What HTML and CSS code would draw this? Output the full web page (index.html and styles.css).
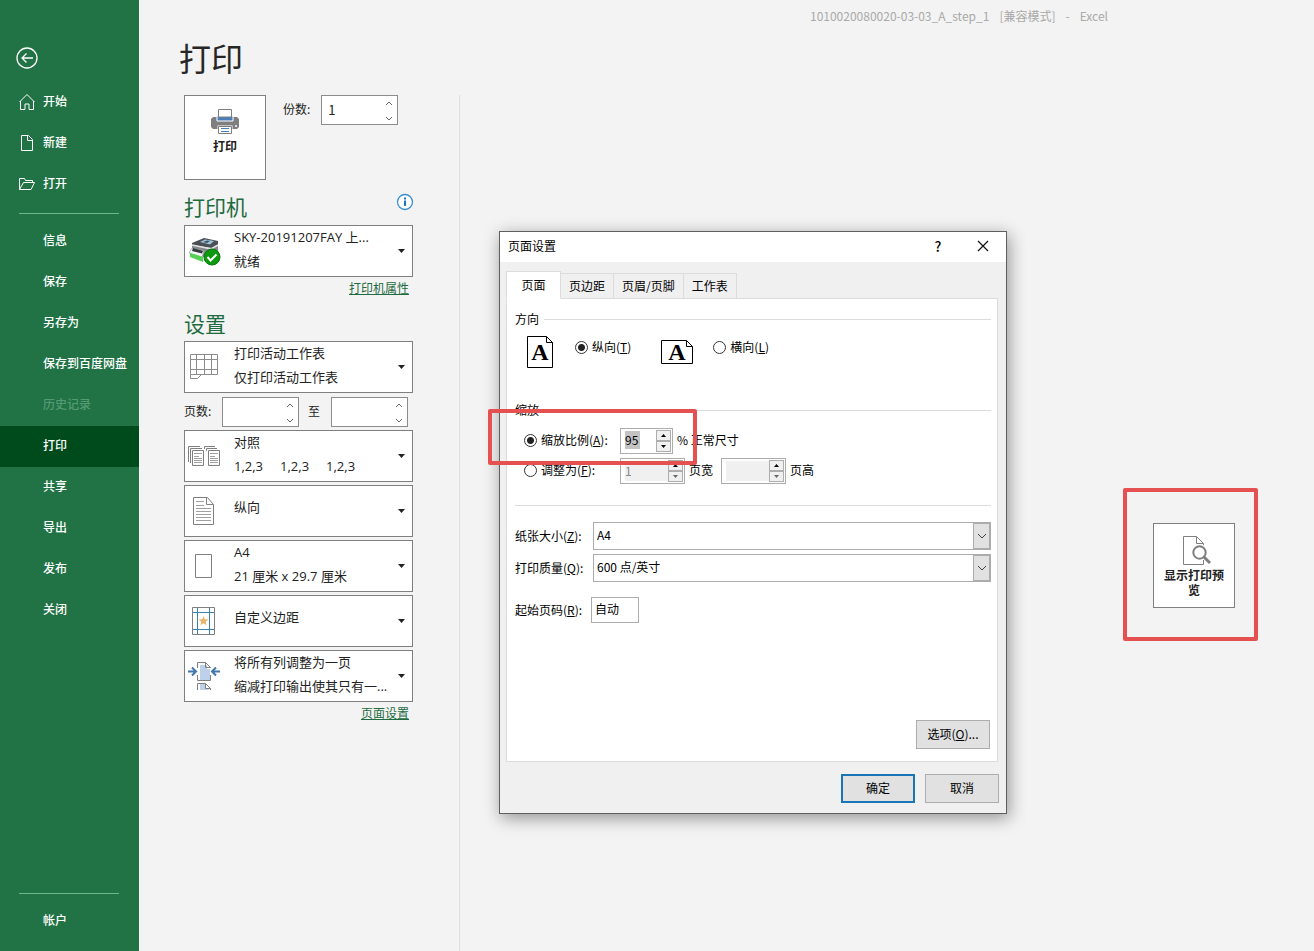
FILE: index.html
```html
<!DOCTYPE html>
<html lang="zh-CN">
<head>
<meta charset="utf-8">
<title>打印 - Excel</title>
<link rel="stylesheet" href="styles.css">
</head>
<body>
<svg class="defs" aria-hidden="true">
  <symbol id="up" viewBox="0 0 8 5"><path d="M1 4 4 1l3 3" fill="none" stroke="#666"/></symbol>
  <symbol id="down" viewBox="0 0 8 5"><path d="M1 1l3 3 3-3" fill="none" stroke="#666"/></symbol>
  <symbol id="tri-up" viewBox="0 0 5 3"><path d="M0 3 2.500 0 5 3z" fill="currentColor"/></symbol>
  <symbol id="tri-down" viewBox="0 0 7 4"><path d="M0 0h7L3.500 4z" fill="currentColor"/></symbol>
</svg>
<div class="app">
  <nav class="sidebar">
    <button class="back" aria-label="返回"><svg width="22" height="22" viewBox="0 0 22 22"><circle cx="11" cy="11" r="10" /><path d="M17 11H6M10.500 6.500 6 11l4.500 4.500"/></svg></button>
    <a class="item" href="#"><svg width="18" height="18" viewBox="0 0 18 18"><path d="M1.500 9 9 1.500 16.500 9M2.500 8v8.500H7V11h4v5.500h4.500V8"/></svg>开始</a>
    <a class="item" href="#"><svg width="18" height="18" viewBox="0 0 18 18"><path d="M3.500 1.500h7l4 4v11h-11zM9.500 1.500v5h5"/></svg>新建</a>
    <a class="item" href="#"><svg width="18" height="18" viewBox="0 0 18 18"><path d="M1.500 14.500v-11h5l1 2h7v2M1.500 14.500l4-7h11l-3.500 7z"/></svg>打开</a>
    <hr>
    <a class="item plain" href="#">信息</a>
    <a class="item plain" href="#">保存</a>
    <a class="item plain" href="#">另存为</a>
    <a class="item plain" href="#">保存到百度网盘</a>
    <a class="item plain disabled" aria-disabled="true">历史记录</a>
    <a class="item plain active" href="#" aria-current="page">打印</a>
    <a class="item plain" href="#">共享</a>
    <a class="item plain" href="#">导出</a>
    <a class="item plain" href="#">发布</a>
    <a class="item plain" href="#">关闭</a>
    <hr class="last">
    <a class="item" href="#">帐户</a>
  </nav>

  <main class="main">
    <header class="titlebar"><span>1010020080020-03-03_A_step_1</span><span>[兼容模式]</span><span>-</span><span>Excel</span></header>
    <h1>打印</h1>
    <div class="columns">
      <section class="settings">
        <div class="print-row">
          <button class="tile">
            <svg width="28" height="26" viewBox="0 0 28 26"><path d="M2 8h24l2 2v8l-2 2H2l-2-2v-8z" fill="#7f7f7f"/><path d="M6 7h16v5H6z" fill="#4a7ebb" stroke="#fff"/><path d="M7.500.500h13V8h-13z" fill="#fff" stroke="#7f7f7f"/><circle cx="25" cy="17" r="1" fill="#fff"/><path d="M6.500 16.500h15V20h-15z" fill="#fff"/><path d="M7.500 17.500h13v7h-13z" fill="#fff" stroke="#7f7f7f"/><path d="M10 19.500h8M10 22.500h8" stroke="#4a7ebb"/></svg>
            <span>打印</span>
          </button>
          <label for="copies">份数:</label>
          <div class="spin"><input id="copies" value="1"><span class="arrows"><button aria-label="增加份数"><svg><use href="#up"/></svg></button><button aria-label="减少份数"><svg><use href="#down"/></svg></button></span></div>
        </div>

        <div class="head">
          <h2>打印机</h2>
          <svg class="info" width="18" height="18" viewBox="0 0 18 18"><circle cx="9" cy="9" r="7.500" fill="#fff" stroke="#3a8fd0" stroke-width="1.300"/><path d="M9 7.500V13M9 4.500v2" stroke="#1f78c0" stroke-width="2"/></svg>
        </div>
        <button class="picker" aria-haspopup="listbox">
          <svg class="ico" width="36" height="36" viewBox="0 0 36 36"><path d="m6 10 12-5 14 3v4l-6 3-20-3z" fill="#4b4f55"/><path d="m14 9 5-2.500 9 1.500-4 3.500z" fill="#9fc6dc"/><path d="m17 9 4-1.500 3 .500-3 2z" fill="#3f5361"/><path d="m6 12 19 4 7-4v9l-6 6-20-7z" fill="#85898d"/><path d="m6 12 19 4 7-4" fill="none" stroke="#dfe1e3" stroke-width="1.500"/><path d="m3 20 3-5 12 3-2 6z" fill="#f3f5f6" stroke="#9a9fa3" stroke-width=".700"/><path d="m7 15 10 3-1 2.500-10-2.500z" fill="#33383c"/><path d="m4 20 13 4v5L4 24z" fill="#54d353"/><circle cx="26" cy="24" r="8" fill="#0c990f" stroke="#08770b"/><path d="m21.500 24 3 3.500 6-6" fill="none" stroke="#fff" stroke-width="2"/></svg>
          <span class="txt"><span>SKY-20191207FAY 上...</span><span>就绪</span></span>
          <svg class="caret"><use href="#tri-down"/></svg>
        </button>
        <a class="link" href="#">打印机属性</a>

        <div class="head second"><h2>设置</h2></div>
        <div class="stack">
          <button class="picker" aria-haspopup="listbox">
            <svg class="ico" width="36" height="36" viewBox="0 0 36 36"><path d="M4.500 24.500v-19h27v20h-16l-4 4h-7v-5M4.500 10.500h27M4.500 20.500h27M4.500 25.500H16M10.500 5.500v20M18.500 5.500v20M25.500 5.500v20" fill="none" stroke="#8c8c8c"/></svg>
            <span class="txt"><span>打印活动工作表</span><span>仅打印活动工作表</span></span>
            <svg class="caret"><use href="#tri-down"/></svg>
          </button>
          <div class="pages">
            <label for="from">页数:</label>
            <div class="spin"><input id="from"><span class="arrows"><button aria-label="增加起始页"><svg><use href="#up"/></svg></button><button aria-label="减少起始页"><svg><use href="#down"/></svg></button></span></div>
            <label for="to">至</label>
            <div class="spin"><input id="to"><span class="arrows"><button aria-label="增加结束页"><svg><use href="#up"/></svg></button><button aria-label="减少结束页"><svg><use href="#down"/></svg></button></span></div>
          </div>
          <button class="picker" aria-haspopup="listbox">
            <svg class="ico" width="36" height="36" viewBox="0 0 36 36"><g fill="#fff" stroke="#7f7f7f"><path d="M2.500 24V8.500H14M4.500 25V10.500H16M18.500 11V8.500H29M20.500 13v-2.500H31" fill="none"/><path d="M6.500 12.500h11v15h-11zM22.500 12.500h11v15h-11z"/><path d="M8 15.500h8M8 18.500h5M8 20.500h8M8 22.500h8M8 24.500h8M24 15.500h8M24 18.500h5M24 20.500h8M24 22.500h8M24 24.500h8" stroke="#a0a0a0"/></g></svg>
            <span class="txt"><span>对照</span><span class="sets"><span>1,2,3</span><span>1,2,3</span><span>1,2,3</span></span></span>
            <svg class="caret"><use href="#tri-down"/></svg>
          </button>
          <button class="picker" aria-haspopup="listbox">
            <svg class="ico" width="36" height="36" viewBox="0 0 36 36"><path d="M7.500 4.500h14l6 7v20h-20zM20.500 4.500v7h7" fill="none" stroke="#7f7f7f"/><path d="M10 8.500h8M10 12.500h8M10 15.500h15M10 18.500h15M10 21.500h15M10 24.500h15M10 27.500h15" stroke="#a0a0a0"/></svg>
            <span class="txt"><span>纵向</span></span>
            <svg class="caret"><use href="#tri-down"/></svg>
          </button>
          <button class="picker" aria-haspopup="listbox">
            <svg class="ico" width="36" height="36" viewBox="0 0 36 36"><path d="M9.500 6.500h16v23h-16z" fill="none" stroke="#7f7f7f"/></svg>
            <span class="txt"><span>A4</span><span>21 厘米 x 29.7 厘米</span></span>
            <svg class="caret"><use href="#tri-down"/></svg>
          </button>
          <button class="picker" aria-haspopup="listbox">
            <svg class="ico" width="36" height="36" viewBox="0 0 36 36"><path d="M6.500 4.500h22v27h-22z" fill="none" stroke="#7f7f7f"/><path d="M11.500 5v26M23.500 5v26M7 9.500h21M7 26.500h21" stroke="#3a80ae"/><path d="m17.500 13 1.300 3.300 3.700.200-2.900 2.200 1 3.500-3.100-2-3.100 2 1-3.500-2.900-2.200 3.700-.200z" fill="#ebb468"/></svg>
            <span class="txt"><span>自定义边距</span></span>
            <svg class="caret"><use href="#tri-down"/></svg>
          </button>
          <button class="picker" aria-haspopup="listbox">
            <svg class="ico" width="36" height="36" viewBox="0 0 36 36"><path d="M14 7h7v4h3v11H14zM14 26h6v4h3v2h-9z" fill="#bdd2ea"/><path d="M11.500 10V4.500h8l5 5V10M11.500 17v5.500h13V17M19.500 4.500v5h5M11.500 32v-6.500h8l5 5V32M19.500 25.500v5h5" fill="none" stroke="#7f7f7f"/><path d="M2 13.500h7M6 9.500l4 4-4 4M34 13.500h-7M30 9.500l-4 4 4 4" fill="none" stroke="#4375ad" stroke-width="2"/></svg>
            <span class="txt"><span>将所有列调整为一页</span><span>缩减打印输出使其只有一...</span></span>
            <svg class="caret"><use href="#tri-down"/></svg>
          </button>
        </div>
        <a class="link" href="#">页面设置</a>
      </section>

      <section class="preview">
        <div class="marked">
          <button class="tile wide">
            <svg width="30" height="29" viewBox="0 0 30 29"><path d="M22.500 24v4.500h-20v-28h13l7 7v3M15.500.500v7h7" fill="none" stroke="#7f7f7f"/><circle cx="18.500" cy="16.500" r="8.500" fill="#fff"/><circle cx="18.500" cy="16.500" r="6.200" fill="#fff" stroke="#7f7f7f" stroke-width="2"/><path d="m23 21 6 6" stroke="#7f7f7f" stroke-width="3"/></svg>
            <span>显示打印预览</span>
          </button>
          <span class="mark"></span>
        </div>
      </section>
    </div>
  </main>

  <div class="dialog" role="dialog" aria-labelledby="dlg-title">
    <header class="dlg-title">
      <span id="dlg-title">页面设置</span>
      <button class="help" aria-label="帮助">?</button>
      <button aria-label="关闭"><svg width="12" height="12" viewBox="0 0 12 12"><path d="m1 1 10 10M11 1 1 11" stroke="#111" stroke-width="1.200"/></svg></button>
    </header>
    <div class="dlg-body">
      <div class="tabs" role="tablist">
        <button role="tab" aria-selected="true">页面</button>
        <button role="tab">页边距</button>
        <button role="tab">页眉/页脚</button>
        <button role="tab">工作表</button>
      </div>
      <form class="panel">
        <div class="legend">方向</div>
        <div class="orient">
          <svg width="26" height="32" viewBox="0 0 26 32"><path d="M.500.500h19l6 6v25H.500zM19.500.500v6h6" fill="#fff" stroke="#000"/><text x="13" y="24" class="glyph">A</text></svg>
          <input type="radio" name="orient" id="portrait" checked><label for="portrait">纵向(<u>T</u>)</label>
          <svg class="land" width="32" height="24" viewBox="0 0 32 24"><path d="M.500.500h25l6 6v17H.500zM25.500.500v6h6" fill="#fff" stroke="#000"/><text x="16" y="20" class="glyph">A</text></svg>
          <input type="radio" name="orient" id="landscape"><label for="landscape">横向(<u>L</u>)</label>
        </div>
        <div class="legend scale-head">缩放</div>
        <div class="scale marked">
          <div class="opt"><input type="radio" name="scale" id="adjust" checked><label for="adjust">缩放比例(<u>A</u>):</label></div>
          <div class="num narrow"><input value="95" aria-label="缩放比例" class="sel"><span class="steps"><button type="button" aria-label="增大"><svg><use href="#tri-up"/></svg></button><button type="button" aria-label="减小"><svg><use href="#tri-down"/></svg></button></span></div>
          <span>% 正常尺寸</span>
          <span class="mark"></span>
        </div>
        <div class="scale">
          <div class="opt"><input type="radio" name="scale" id="fit"><label for="fit">调整为(<u>F</u>):</label></div>
          <div class="num off"><input value="1" aria-label="页宽" disabled><span class="steps"><button type="button" aria-label="增加页宽"><svg><use href="#tri-up"/></svg></button><button type="button" aria-label="减少页宽"><svg><use href="#tri-down"/></svg></button></span></div>
          <span class="unit">页宽</span>
          <div class="num off"><input aria-label="页高" disabled><span class="steps"><button type="button" aria-label="增加页高"><svg><use href="#tri-up"/></svg></button><button type="button" aria-label="减少页高"><svg><use href="#tri-down"/></svg></button></span></div>
          <span>页高</span>
        </div>
        <hr>
        <div class="field"><label for="paper">纸张大小(<u>Z</u>):</label><div class="combo"><select id="paper"><option>A4</option></select><span class="drop"><svg width="10" height="6" viewBox="0 0 10 6"><path d="m1 1 4 4 4-4" fill="none" stroke="#444"/></svg></span></div></div>
        <div class="field"><label for="quality">打印质量(<u>Q</u>):</label><div class="combo"><select id="quality"><option>600 点/英寸</option></select><span class="drop"><svg width="10" height="6" viewBox="0 0 10 6"><path d="m1 1 4 4 4-4" fill="none" stroke="#444"/></svg></span></div></div>
        <div class="field first"><label for="start">起始页码(<u>R</u>):</label><input id="start" value="自动"></div>
        <button type="button" class="btn options">选项(<u>O</u>)...</button>
      </form>
      <footer class="dlg-foot"><button class="btn primary">确定</button><button class="btn">取消</button></footer>
    </div>
  </div>
</div>
</body>
</html>
```
FILE: styles.css
```css
* { box-sizing: border-box; }
body { margin: 0; background: #f3f3f3; color: #222; font: 12px/18px "Noto Sans CJK SC", "Noto Sans", sans-serif; }
button, input, select { font: inherit; color: inherit; margin: 0; padding: 0; border: 0; border-radius: 0; background: none; }
svg { display: block; flex: none; }
.defs { position: absolute; width: 0; height: 0; }
.app { position: relative; display: flex; min-height: 100vh; }

.sidebar { flex: none; width: 139px; padding: 47px 0 10px; background: #217346; display: flex; flex-direction: column; }
.sidebar svg { fill: none; stroke: #fff; }
.back { width: 22px; height: 22px; margin: 0 0 12px 16px; }
.back svg { stroke-width: 1.3; }
.item { display: flex; align-items: center; height: 41px; padding: 0 0 2px 43px; color: #fff; font-weight: 500; text-decoration: none; white-space: nowrap; }
.item.plain { padding-bottom: 4px; }
.item svg { margin: 2px 7px 0 -25px; }
.item.active { background: #004b1c; }
.item.disabled { color: #559a73; }
.sidebar hr { width: 100px; height: 1px; margin: 9px 0 7px 19px; border: 0; background: #6fb58d; flex: none; }
.sidebar hr.last { margin-top: auto; margin-bottom: 6px; }

.main { flex: 1; display: flex; flex-direction: column; }
.titlebar { display: flex; justify-content: flex-end; gap: 10px; height: 33px; padding: 7px 206px 0 0; color: #a9a9a9; }
h1 { margin: 0 0 14px 40px; font-size: 32px; line-height: 48px; font-weight: 400; color: #262626; }
.columns { flex: 1; display: flex; }
.settings { flex: none; width: 321px; padding: 0 46px 0 45px; border-right: 1px solid #dedede; display: flex; flex-direction: column; }
.print-row { display: flex; align-items: flex-start; }
.print-row label { margin: 5px 11px 0 17px; }
.tile { display: flex; flex-direction: column; align-items: center; width: 82px; height: 85px; padding: 13px 8px 0; border: 1px solid #7f7f7f; background: #fff; font-weight: 700; line-height: 15px; }
.tile span { margin-top: 3px; }
.tile.wide { padding-top: 12px; }
.tile.wide svg { margin-left: 3px; }
.tile.wide span { margin-top: 2px; }
.spin { display: flex; width: 77px; height: 30px; border: 1px solid #8c8c8c; background: #fff; }
.spin input { flex: 1; min-width: 0; padding-left: 6px; font-size: 13px; outline: 0; }
.arrows { width: 16px; display: flex; flex-direction: column; justify-content: space-between; padding: 5px 4px 3px; }
.arrows button { height: 5px; }
.arrows svg { width: 8px; height: 5px; }
.head { display: flex; justify-content: space-between; height: 45px; padding-top: 10px; }
.head.second { height: 44px; }
h2 { margin: 0; font-size: 21px; line-height: 32px; font-weight: 400; color: #1e6b3f; }
.info { margin: 3px -1px 0 0; }
.picker { display: flex; align-items: center; width: 229px; height: 52px; border: 1px solid #7f7f7f; background: #fff; text-align: left; font-family: "Open Sans", "Noto Sans CJK SC", sans-serif; font-size: 13px; line-height: 24px; }
.ico { margin-left: 1px; }
.txt { flex: 1; display: flex; flex-direction: column; padding: 0 0 5px 12px; white-space: nowrap; }
.txt:has(> :only-child) { padding-bottom: 9px; }
.sets { display: flex; gap: 17px; }
.caret { width: 7px; height: 4px; margin: 0 7px 0 -4px; color: #222; }
.link { align-self: flex-end; margin: 2px 4px 0 0; color: #1e6b3f; }
.stack { display: flex; flex-direction: column; gap: 3px; }
.pages { display: flex; align-items: center; margin-top: 1px; }
.pages label { width: 38px; padding-bottom: 3px; }
.pages .spin + label { width: 32px; padding-left: 9px; }
.preview { flex: 1; display: flex; justify-content: flex-end; align-items: flex-start; padding: 428px 79px 0 0; }
.marked { position: relative; }
.mark { position: absolute; inset: -35px -23px -33px -30px; border: 4px solid #e55050; border-radius: 2px; pointer-events: none; }

.dialog { position: absolute; left: 499px; top: 231px; width: 508px; border: 1px solid #5f5f5f; background: #f0f0f0; color: #000; box-shadow: 2px 4px 16px rgba(0, 0, 0, .4); }
.dlg-title { display: flex; align-items: center; height: 30px; padding: 0 8px; background: #fff; }
.dlg-title span { flex: 1; padding-bottom: 2px; }
.dlg-title button { display: grid; place-items: center; width: 30px; height: 30px; padding-bottom: 2px; }
.dlg-title .help { margin-right: 15px; font-size: 14px; font-weight: 500; }
.dlg-body { padding: 9px 8px 10px 6px; }
.tabs { display: flex; align-items: flex-end; height: 28px; margin-bottom: -1px; }
.tabs button { height: 26px; padding: 0 8px; border: 1px solid #dcdcdc; border-left: 0; }
.tabs button[aria-selected] { height: 28px; width: 55px; border-left: 1px solid #dcdcdc; border-bottom-color: #fff; background: #fff; z-index: 1; }
.panel { display: flex; flex-direction: column; border: 1px solid #dcdcdc; background: #fff; padding: 11px 6px 12px 8px; }
.legend { display: flex; align-items: center; gap: 5px; }
.legend::after { content: ""; flex: 1; height: 1px; background: #dcdcdc; }
.orient { display: flex; align-items: flex-start; height: 32px; margin: 8px 0 0 12px; }
input[type=radio] { appearance: none; flex: none; width: 13px; height: 13px; border: 1px solid #333; border-radius: 50%; background: #fff; }
input[type=radio]:checked { background: radial-gradient(circle, #222 0 3px, #fff 4px); }
.orient input { margin: 5px 4px 0 22px; }
.orient label { margin-top: 2px; }
.orient .land { margin: 4px 0 0 30px; overflow: visible; }
.orient .land + input { margin-left: 20px; }
.glyph { font: bold 24px/24px "Liberation Serif", serif; text-anchor: middle; }
.scale-head { margin-top: 33px; }
.scale { display: flex; align-items: center; gap: 4px; height: 26px; margin: 9px 0 0 9px; }
.scale > span, .opt label { padding-bottom: 2px; }
.scale + .scale { margin-top: 4px; }
.scale .mark { inset: -19px auto -11px -36px; width: 209px; }
.opt { display: flex; align-items: center; gap: 4px; width: 92px; }
.opt input { margin-bottom: 1px; }
.num { display: flex; width: 65px; height: 26px; border: 1px solid #acacac; padding: 1px; }
.num.narrow { width: 53px; }
.num input { flex: 1; min-width: 0; height: 18px; margin: 1px 0 0 3px; }
.num .sel { flex: none; width: 15px; margin-right: auto; background: #c3c3c3; }
.num.off input { height: 20px; padding-bottom: 2px; background: #f0f0f0; color: #888; }
.steps { display: flex; flex-direction: column; width: 15px; }
.steps button { flex: 1; display: grid; place-items: center; border: 1px solid #adadad; background: #f0f0f0; }
.steps svg { width: 5px; height: 3px; }
.off .steps button + button { color: #666; }
.unit { margin-right: 4px; }
.panel hr { width: 100%; height: 1px; margin: 21px 0 16px; border: 0; background: #dcdcdc; }
.field { display: flex; align-items: center; margin-bottom: 4px; }
.field label { width: 78px; padding-bottom: 1px; }
.combo { position: relative; flex: 1; height: 28px; border: 1px solid #acacac; }
.combo select { appearance: none; width: 100%; height: 26px; padding: 0 0 2px 3px; }
.drop { position: absolute; top: 0; right: 0; width: 17px; height: 26px; display: grid; place-items: center; border: 1px solid #acacac; background: #e1e1e1; pointer-events: none; }
.field.first { margin: 11px 0 0; }
.first label { width: 76px; }
.first input { width: 48px; height: 26px; padding: 0 0 3px 3px; border: 1px solid #acacac; }
.btn { width: 74px; height: 29px; padding-bottom: 2px; border: 1px solid #adadad; background: #e1e1e1; }
.options { align-self: flex-end; margin: 97px 1px 0 0; }
.primary { border: 2px solid #1a74b8; }
.dlg-foot { display: flex; justify-content: flex-end; gap: 10px; margin: 12px -1px 0 0; }
```
